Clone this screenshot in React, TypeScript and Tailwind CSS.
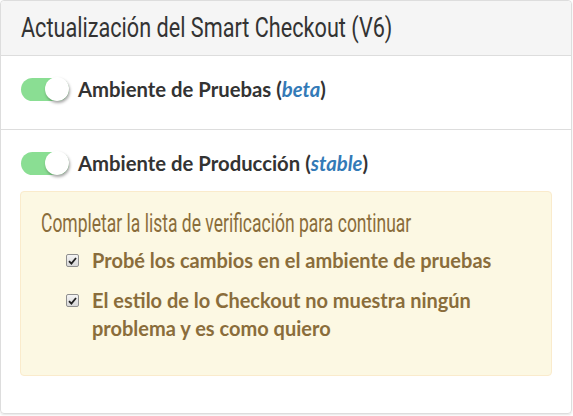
function Toggle() {
  return (
    <span className="relative inline-block h-[23px] w-[48px] shrink-0 rounded-full bg-[#8ade93]">
      <span className="absolute right-0 top-[-0.5px] h-[24px] w-[24px] rounded-full bg-white shadow-[1px_2px_3px_rgba(0,0,0,0.35)]" />
    </span>
  );
}

function Check() {
  return (
    <span className="mt-[8px] flex h-[13px] w-[13px] shrink-0 items-center justify-center rounded-[2px] border border-[#8f8f8f] bg-gradient-to-b from-[#f4f4f4] to-[#d8d8d8]">
      <svg width="9" height="8" viewBox="0 0 9 8">
        <path d="M1 4.2 L3.4 6.6 L8 1" stroke="#222" strokeWidth="1.8" fill="none" />
      </svg>
    </span>
  );
}

export default function App() {
  const items = [
    "Probé los cambios en el ambiente de pruebas",
    "El estilo de lo Checkout no muestra ningún problema y es como quiero",
  ];

  return (
    <div className="h-[416px] w-[573px] bg-white font-['Lato',sans-serif]">
      <div className="h-[414px] w-[572px] rounded-[4px] border border-[#dddddd] shadow-[0_1px_2px_rgba(0,0,0,0.1)]">
        <div className="flex h-[55px] items-center overflow-hidden rounded-t-[4px] border-b border-[#dddddd] bg-[#f5f5f5] px-[20px]">
          <h3 className="inline-block origin-left scale-x-[0.773] whitespace-nowrap font-['Roboto',sans-serif] text-[28px] leading-[34px] text-[#333333]">
            Actualización del Smart Checkout (V6)
          </h3>
        </div>

        <div className="flex items-center gap-[9px] border-b border-[#dddddd] px-[20px] pb-[28px] pt-[21px]">
          <Toggle />
          <span className="text-[20.3px] font-bold leading-[24px] text-[#333333]">
            Ambiente de Pruebas (<i className="text-[#337ab7]">beta</i>)
          </span>
        </div>

        <div className="px-[19px] pt-[21px]">
          <div className="flex items-center gap-[9px] pl-px">
            <Toggle />
            <span className="text-[20.3px] font-bold leading-[24px] text-[#333333]">
              Ambiente de Producción (<i className="text-[#337ab7]">stable</i>)
            </span>
          </div>

          <div className="mt-[16px] h-[185px] rounded-[4px] border border-[#faebcc] bg-[#fcf8e3] px-[20px] pt-[17px] text-[#8a6d3b]">
            <h4 className="inline-block origin-left scale-x-[0.7] whitespace-nowrap font-['Roboto',sans-serif] text-[25px] leading-[30px]">
              Completar la lista de verificación para continuar
            </h4>
            <ul className="mt-[7px] flex flex-col gap-[12px] pl-[25px]">
              {items.map((t) => (
                <li key={t} className="flex gap-[13px]">
                  <Check />
                  <span className="text-[20px] font-bold leading-[28px]">{t}</span>
                </li>
              ))}
            </ul>
          </div>
        </div>
      </div>
    </div>
  );
}
